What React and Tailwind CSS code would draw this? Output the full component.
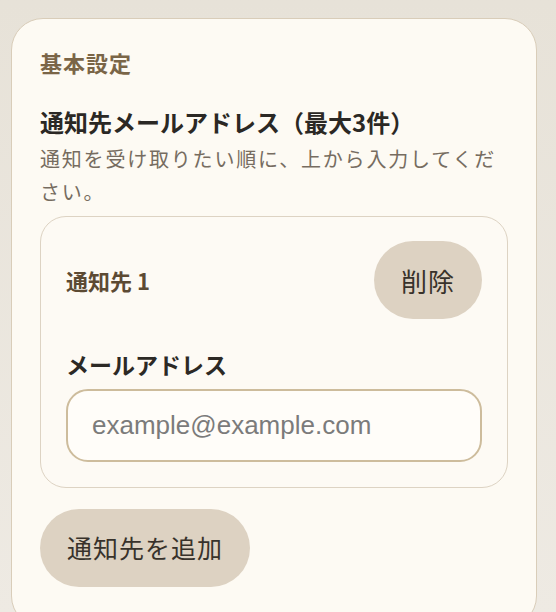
import { useState } from 'react';

const jp = { fontFamily: '"Noto Sans CJK JP", "Noto Sans", sans-serif' };

// One recipient block: header row with delete, then the address field
function RecipientCard({ index, value, onChange, onRemove }) {
  return (
    <div className="mt-[8px] rounded-[26px] border-[1.5px] border-[#ddd3c3] bg-[#fdfaf4] px-[25px] pt-[24px] pb-[25px]">
      <div className="flex items-center justify-between">
        <span className="text-[22px] font-bold leading-[34px] text-[#5c4a33]">
          通知先 {index + 1}
        </span>
        <button
          type="button"
          onClick={onRemove}
          className="h-[78px] rounded-full bg-[#ddd2c2] px-[27px] text-[26px] tracking-[1px] text-[#38322b]"
        >
          削除
        </button>
      </div>

      <label className="mt-[28px] block text-[23px] font-bold leading-[34px] text-[#2c2925]">
        メールアドレス
      </label>
      <input
        type="email"
        value={value}
        onChange={(e) => onChange(e.target.value)}
        placeholder="example@example.com"
        style={{ fontFamily: '"Liberation Sans", Arial, sans-serif' }}
        className="mt-[8px] block h-[73px] w-full rounded-[22px] border-2 border-[#cdbc9c] bg-[#fffdf9] px-[24px] text-[26px] text-[#333] outline-none placeholder:text-[#7b7b7b]"
      />
    </div>
  );
}

export default function App() {
  const [emails, setEmails] = useState(['']);

  const updateEmail = (i, v) => setEmails((prev) => prev.map((e, idx) => (idx === i ? v : e)));
  const removeEmail = (i) => setEmails((prev) => prev.filter((_, idx) => idx !== i));
  const addEmail = () => setEmails((prev) => (prev.length < 3 ? [...prev, ''] : prev));

  return (
    <div
      style={jp}
      className="h-screen overflow-hidden bg-gradient-to-b from-[#e7e2d8] to-[#eeeae3] pt-[18px] pl-[11px]"
    >
      <section className="w-[526px] rounded-[32px] border-[1.5px] border-[#d9cdb9] bg-[#fdfaf3] px-[28px] pt-[27px] pb-[40px]">
        <h2 className="text-[22px] font-bold leading-[33px] tracking-[1px] text-[#7a6547]">基本設定</h2>

        <h3 className="mt-[25px] text-[24px] font-bold leading-[36px] text-[#2b2824]">
          通知先メールアドレス（最大3件）
        </h3>
        <p className="mt-[2px] text-[20px] leading-[33px] tracking-[1.8px] text-[#766c60]">
          通知を受け取りたい順に、上から入力してください。
        </p>

        {emails.map((email, i) => (
          <RecipientCard
            key={i}
            index={i}
            value={email}
            onChange={(v) => updateEmail(i, v)}
            onRemove={() => removeEmail(i)}
          />
        ))}

        <button
          type="button"
          onClick={addEmail}
          className="mt-[21px] h-[78px] rounded-full bg-[#ddd2c2] px-[27px] text-[25px] tracking-[1px] text-[#38322b]"
        >
          通知先を追加
        </button>
      </section>
    </div>
  );
}
